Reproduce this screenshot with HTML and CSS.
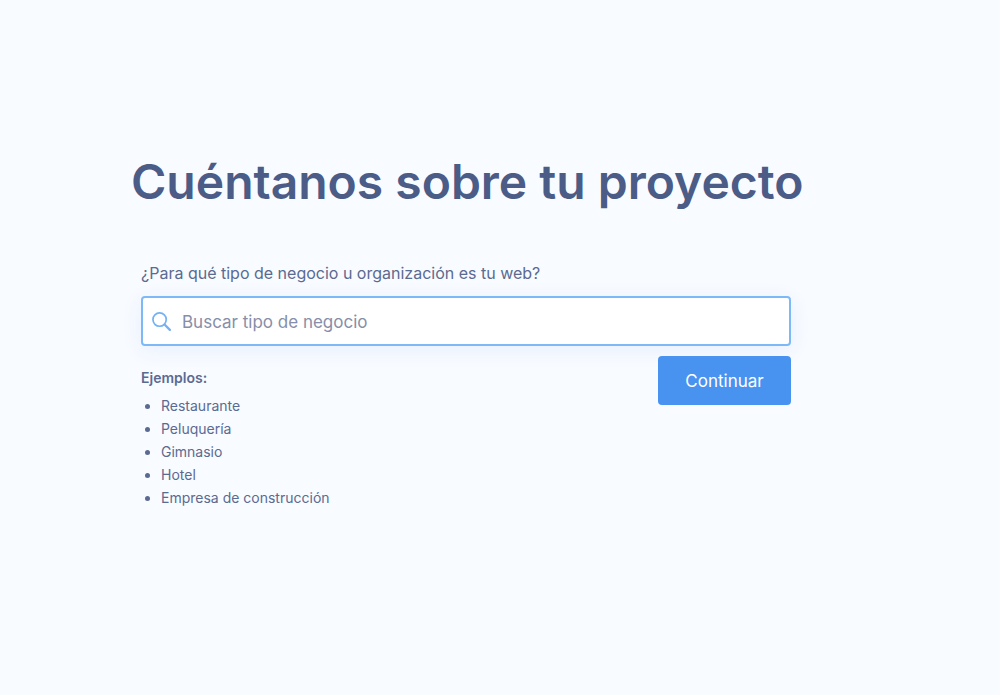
FILE: index.html
```html
<!DOCTYPE html>
<html lang="es">
<head>
<meta charset="utf-8">
<meta name="viewport" content="width=device-width, initial-scale=1">
<title>Cuéntanos sobre tu proyecto</title>
<link rel="stylesheet" href="styles.css">
</head>
<body>
<main class="container">
    <h1>Cuéntanos sobre tu proyecto</h1>

    <form class="form">
        <label for="businessType">¿Para qué tipo de negocio u organización es tu web?</label>
        <div class="search-box">
            <svg class="search-icon" viewBox="0 0 20 20" aria-hidden="true">
                <circle cx="8" cy="8" r="7"/>
                <path class="handle" d="M13.2 13.2L18.8 18.8"/>
            </svg>
            <input type="text" id="businessType" placeholder="Buscar tipo de negocio">
        </div>

        <div class="form-footer">
            <div class="examples">
                <h2>Ejemplos:</h2>
                <ul>
                    <li>Restaurante</li>
                    <li>Peluquería</li>
                    <li>Gimnasio</li>
                    <li>Hotel</li>
                    <li>Empresa de construcción</li>
                </ul>
            </div>
            <button type="submit" class="btn">Continuar</button>
        </div>
    </form>
</main>
</body>
</html>
```
FILE: styles.css
```css
* {
    box-sizing: border-box;
}

body {
    margin: 0;
    padding-right: 68px;
    background-color: #f8fbff;
    color: #5b6a91;
    font-family: Inter, "Liberation Sans", sans-serif;
}

.container {
    max-width: 670px;
    margin: 0 auto;
    padding: 152px 0 40px;
}

h1 {
    margin: 0;
    color: #4b5c87;
    font-size: 48px;
    line-height: 60px;
    font-weight: 600;
    white-space: nowrap;
}

.form {
    margin: 48px 10px 0;
}

.form label {
    display: block;
    font-size: 16px;
    line-height: 26px;
}

.search-box {
    display: flex;
    align-items: center;
    gap: 11px;
    height: 50px;
    margin-top: 10px;
    padding: 0 9px;
    background-color: #fff;
    border: 2px solid #7db9f6;
    border-radius: 4px;
    box-shadow: 0 4px 20px rgba(72, 120, 240, 0.09);
}

.search-icon {
    width: 19px;
    height: 19px;
    fill: none;
    stroke: #73b1f4;
    stroke-width: 1.8;
}

.search-icon .handle {
    stroke-width: 2.4;
    stroke-linecap: round;
}

.search-box input {
    flex: 1;
    min-width: 0;
    padding: 2px 0 0;
    border: none;
    outline: none;
    background: none;
    color: #5b6a91;
    font-family: inherit;
    font-size: 17px;
}

.search-box input::placeholder {
    color: #868ea9;
}

.form-footer {
    display: flex;
    justify-content: space-between;
    align-items: flex-start;
    margin-top: 10px;
}

.examples {
    padding-top: 12px;
    font-size: 14px;
}

.examples h2 {
    margin: 0 0 6px;
    font-size: 14px;
    line-height: 20px;
    font-weight: 600;
}

.examples ul {
    margin: 0;
    padding-left: 20px;
}

.examples li {
    line-height: 23px;
}

.btn {
    width: 133px;
    height: 49px;
    border: none;
    border-radius: 4px;
    background-color: #4892f0;
    color: #fff;
    font-family: inherit;
    font-size: 17px;
    cursor: pointer;
}
```
